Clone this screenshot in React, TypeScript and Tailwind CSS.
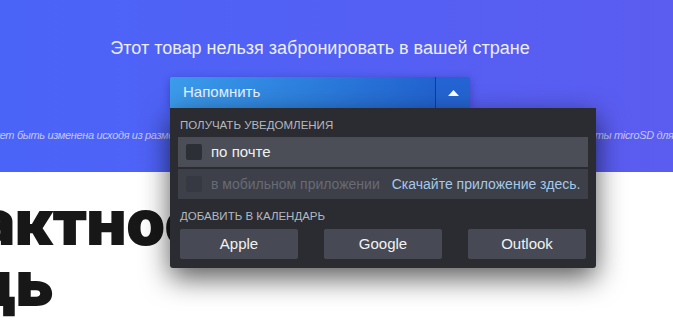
import React from "react";

const Checkbox: React.FC<{ disabled?: boolean }> = ({ disabled }) => (
  <span
    className={
      "block w-4 h-4 rounded-[2px] shrink-0 " +
      (disabled ? "bg-[#363941]" : "bg-[#2c2f36]")
    }
  />
);

const CalendarButton: React.FC<{ label: string }> = ({ label }) => (
  <button className="w-[118px] h-[30px] rounded-[2px] bg-[#474a54] text-[15px] text-[#f2f2f2] flex items-center justify-center">
    {label}
  </button>
);

export default function App() {
  return (
    <div className="relative w-[673px] h-[324px] overflow-hidden bg-white font-['Liberation_Sans',Arial,sans-serif]">
      <section className="h-[172px] bg-gradient-to-r from-[#4a64f8] to-[#5b5cf0] flex flex-col items-center pt-[37px] pr-[33px]">
        <h2 className="text-[18px] leading-[22px] text-[#eceeff] whitespace-nowrap">
          Этот товар нельзя забронировать в вашей стране
        </h2>

        <div className="relative z-10 mt-[18px] w-[300px]">
          <div className="flex h-[31px] rounded-t-[2px] overflow-hidden shadow-[0_2px_8px_rgba(20,20,80,0.35)]">
            <button className="flex-1 flex items-center pl-[13px] bg-gradient-to-r from-[#3b9bea] to-[#2262cf] text-[15px] text-[#eaf2ff]">
              Напомнить
            </button>
            <span className="w-px bg-[#173b8f]" />
            <button className="w-[34px] flex items-center justify-center bg-[#2464d2]">
              <svg width="11" height="6" viewBox="0 0 11 6">
                <path d="M0 6 L5.5 0 L11 6 Z" fill="#ffffff" />
              </svg>
            </button>
          </div>

          <div className="absolute left-0 top-full w-[426px] bg-[#2b2c31] rounded-b-[3px] px-2 pt-[10px] pb-[9px] shadow-[0_10px_28px_rgba(0,0,0,0.65)] whitespace-nowrap">
            <div className="pl-[2px] h-[14px] text-[11.5px] leading-[14px] text-[#b5b8c0] uppercase">
              Получать уведомления
            </div>
            <div className="mt-[5px] flex flex-col gap-[2px]">
              <label className="h-[30px] flex items-center gap-[9px] pl-2 bg-[#4b4e57] text-[15px] text-[#f0f0f0]">
                <Checkbox />
                по почте
              </label>
              <div className="h-[30px] flex items-center pl-2 bg-[#3d4049] text-[14px]">
                <Checkbox disabled />
                <span className="ml-[9px] text-[#676b75]">в мобильном приложении</span>
                <a className="ml-[12px] text-[#a6c8ea]">Скачайте приложение здесь.</a>
              </div>
            </div>
            <div className="mt-[10px] pl-[2px] h-[14px] text-[11.5px] leading-[14px] text-[#b5b8c0] uppercase">
              Добавить в календарь
            </div>
            <div className="mt-[6px] px-[2px] flex justify-between">
              <CalendarButton label="Apple" />
              <CalendarButton label="Google" />
              <CalendarButton label="Outlook" />
            </div>
          </div>
        </div>

        <div className="mt-[20px] -mr-[33px] self-stretch flex justify-between text-[11px] leading-[14px] italic tracking-[-0.35px] text-[#c3c7f6] whitespace-nowrap">
          <span className="w-[174px] overflow-hidden flex justify-end">
            Ёмкость может быть изменена исходя из разме
          </span>
          <span className="w-[84px] overflow-hidden">рты microSD для хранения</span>
        </div>
      </section>

      <div className="mt-[20px] -ml-[22px] font-['Inter',sans-serif] font-black text-[63px] leading-[61px] text-[#171717] tracking-[-1px]">
        <div>актность</div>
        <div className="-ml-[6px]">дь</div>
      </div>
    </div>
  );
}
